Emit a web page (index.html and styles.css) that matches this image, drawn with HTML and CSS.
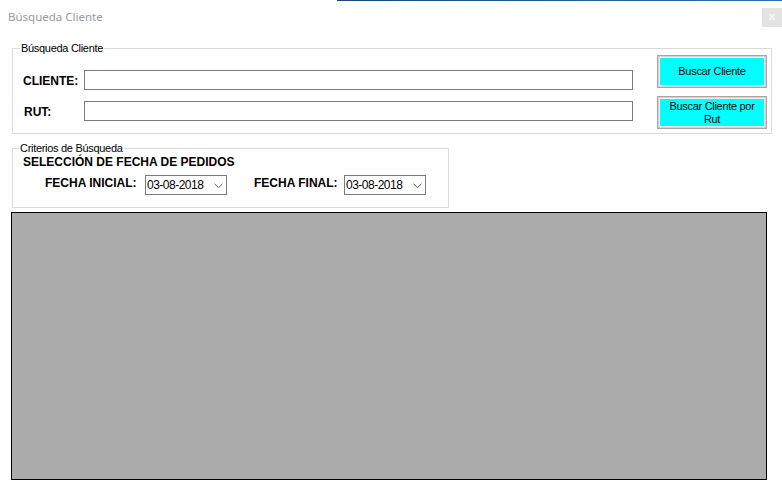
FILE: index.html
```html
<!DOCTYPE html>
<html lang="es">
<head>
<meta charset="utf-8">
<title>Búsqueda Cliente</title>
<link rel="stylesheet" href="styles.css">
</head>
<body>
<div class="window">
  <div class="topline"></div>
  <div class="titlebar">
    <span class="title">Búsqueda Cliente</span>
    <span class="close">x</span>
  </div>

  <fieldset class="group group-client">
    <legend>Búsqueda Cliente</legend>
    <div class="g1-body">
      <div class="fields">
        <div class="row">
          <label class="lbl">CLIENTE:</label>
          <div class="textbox"></div>
        </div>
        <div class="row">
          <label class="lbl lbl-rut">RUT:</label>
          <div class="textbox"></div>
        </div>
      </div>
      <div class="buttons">
        <button class="btn">Buscar Cliente</button>
        <button class="btn">Buscar Cliente por<br>Rut</button>
      </div>
    </div>
  </fieldset>

  <fieldset class="group group-criteria">
    <legend>Criterios de Búsqueda</legend>
    <div class="heading">SELECCIÓN DE FECHA DE PEDIDOS</div>
    <div class="date-row">
      <span class="lbl lbl-start">FECHA INICIAL:</span>
      <div class="datepicker">
        <span class="date">03-08-2018</span>
        <svg class="chev" width="9" height="6" viewBox="0 0 9 6"><path d="M0.5 0.8 L4.5 4.6 L8.5 0.8" fill="none" stroke="#5c5c5c" stroke-width="1"/></svg>
      </div>
      <span class="lbl lbl-end">FECHA FINAL:</span>
      <div class="datepicker">
        <span class="date">03-08-2018</span>
        <svg class="chev" width="9" height="6" viewBox="0 0 9 6"><path d="M0.5 0.8 L4.5 4.6 L8.5 0.8" fill="none" stroke="#5c5c5c" stroke-width="1"/></svg>
      </div>
    </div>
  </fieldset>

  <div class="grid-panel"></div>
</div>
</body>
</html>
```

FILE: styles.css
```css
* { box-sizing: border-box; }

html, body {
  margin: 0;
  padding: 0;
  background: #ffffff;
}

body {
  width: 782px;
  height: 491px;
  overflow: hidden;
  font-family: "Liberation Sans", Arial, sans-serif;
  color: #000;
}

.window {
  display: flex;
  flex-direction: column;
  width: 782px;
  height: 491px;
}

.topline {
  height: 1px;
  margin-left: 337px;
  background: linear-gradient(to right, #1b4a75, #2a6fae);
}

.titlebar {
  height: 33px;
  display: flex;
  align-items: flex-start;
}

.title {
  margin-top: 8px;
  margin-left: 8px;
  font-family: "Noto Sans", "Open Sans", sans-serif;
  font-size: 11.5px;
  line-height: 16px;
  color: #999999;
}

.close {
  margin-left: auto;
  margin-top: 7px;
  width: 20px;
  height: 19px;
  background: #e3e3e3;
  color: #f6f6f6;
  font-family: "DejaVu Sans", sans-serif;
  font-size: 11px;
  font-weight: bold;
  line-height: 18px;
  text-align: center;
}

.group {
  margin: 0;
  border: 1px solid #dcdcdc;
  min-width: 0;
}

.group legend {
  font-size: 11px;
  letter-spacing: -0.3px;
  line-height: 14px;
  padding: 0 1px;
}

.group-client {
  margin-top: 7px;
  margin-left: 12px;
  width: 760px;
  padding: 0 4px 4px 10px;
}

.group-client legend {
  margin-left: -3px;
}

.g1-body {
  display: flex;
  justify-content: space-between;
}

.fields {
  display: flex;
  flex-direction: column;
  gap: 11px;
  padding-top: 15px;
}

.row {
  display: flex;
  align-items: center;
}

.lbl {
  font-size: 12px;
  font-weight: bold;
  line-height: 14px;
}

.row .lbl {
  width: 61px;
  padding-top: 2px;
}

.row .lbl-rut {
  padding-left: 1px;
}

.textbox {
  width: 549px;
  height: 20px;
  border: 1px solid #7a7a7a;
  background: #fff;
}

.buttons {
  display: flex;
  flex-direction: column;
  gap: 8px;
}

.btn {
  width: 110px;
  height: 33px;
  margin: 0;
  padding: 0;
  background: #00ffff;
  border: 1px solid #a6a6a6;
  box-shadow: inset 0 0 0 1px #d4d4d4, inset 0 0 0 2px #eeeeee;
  font-family: "Liberation Sans", Arial, sans-serif;
  font-size: 11px;
  letter-spacing: -0.3px;
  line-height: 13px;
  color: #000;
}

.group-criteria {
  margin-top: 7px;
  margin-left: 12px;
  width: 437px;
  padding: 0 4px 12px 10px;
}

.group-criteria legend {
  margin-left: -4px;
}

.heading {
  font-size: 12px;
  font-weight: bold;
  line-height: 14px;
}

.date-row {
  display: flex;
  align-items: flex-start;
  margin-top: 6px;
}

.date-row .lbl {
  margin-top: 1px;
}

.lbl-start {
  margin-left: 22px;
  width: 100px;
}

.lbl-end {
  margin-left: 27px;
  width: 90px;
}

.datepicker {
  width: 82px;
  height: 20px;
  border: 1px solid #7a7a7a;
  background: #fff;
  display: flex;
  align-items: center;
  padding-left: 1px;
  padding-right: 3px;
}

.date {
  font-size: 12px;
  letter-spacing: -0.5px;
  line-height: 14px;
}

.chev {
  margin-left: auto;
  margin-top: 1px;
}

.grid-panel {
  margin-top: 4px;
  margin-left: 11px;
  width: 756px;
  height: 268px;
  background: #ababab;
  border: 1px solid #000;
}
```
